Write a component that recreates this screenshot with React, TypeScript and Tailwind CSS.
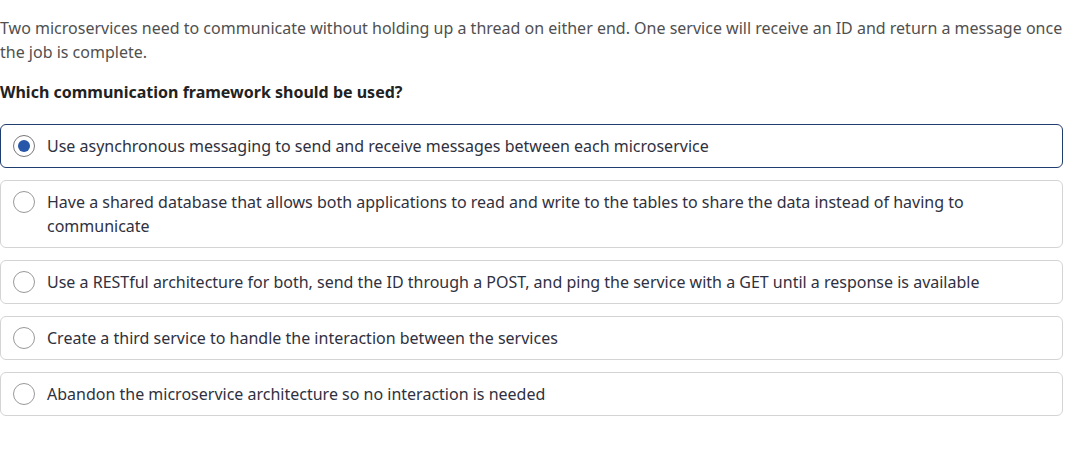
import React from "react";

const options = [
  "Use asynchronous messaging to send and receive messages between each microservice",
  "Have a shared database that allows both applications to read and write to the tables to share the data instead of having to communicate",
  "Use a RESTful architecture for both, send the ID through a POST, and ping the service with a GET until a response is available",
  "Create a third service to handle the interaction between the services",
  "Abandon the microservice architecture so no interaction is needed",
];

export default function App() {
  return (
    <div className="w-[1083px] h-[462px] bg-white" style={{ fontFamily: '"Noto Sans", sans-serif' }}>
      <div className="w-[1063px] pt-[16px]">
        <p className="text-[16px] leading-[24px] text-[#505050]">
          Two microservices need to communicate without holding up a thread on either end. One service will receive an ID and return a message once the job is complete.
        </p>
        <p className="mt-[16px] text-[16px] leading-[24px] font-bold text-[#222]">
          Which communication framework should be used?
        </p>
        <div className="mt-[20px] flex flex-col gap-[12px]">
          {options.map((o, i) => {
            const sel = i === 0;
            return (
              <div
                key={i}
                className={
                  sel
                    ? "flex items-start gap-[12px] rounded-[6px] border border-[#1f3d6e] px-[12px] py-[9px]"
                    : "flex items-start gap-[12px] rounded-[6px] border border-[#d4d4d4] px-[12px] py-[9px]"
                }
              >
                <span
                  className={
                    sel
                      ? "mt-[1px] flex h-[22px] w-[22px] shrink-0 items-center justify-center rounded-full border border-[#777] bg-white"
                      : "mt-[1px] flex h-[22px] w-[22px] shrink-0 items-center justify-center rounded-full border border-[#999] bg-white"
                  }
                >
                  {sel && <span className="h-[12px] w-[12px] rounded-full bg-[#2657a8]" />}
                </span>
                <span className="text-[16px] leading-[24px] text-[#2f3140]">{o}</span>
              </div>
            );
          })}
        </div>
      </div>
    </div>
  );
}
